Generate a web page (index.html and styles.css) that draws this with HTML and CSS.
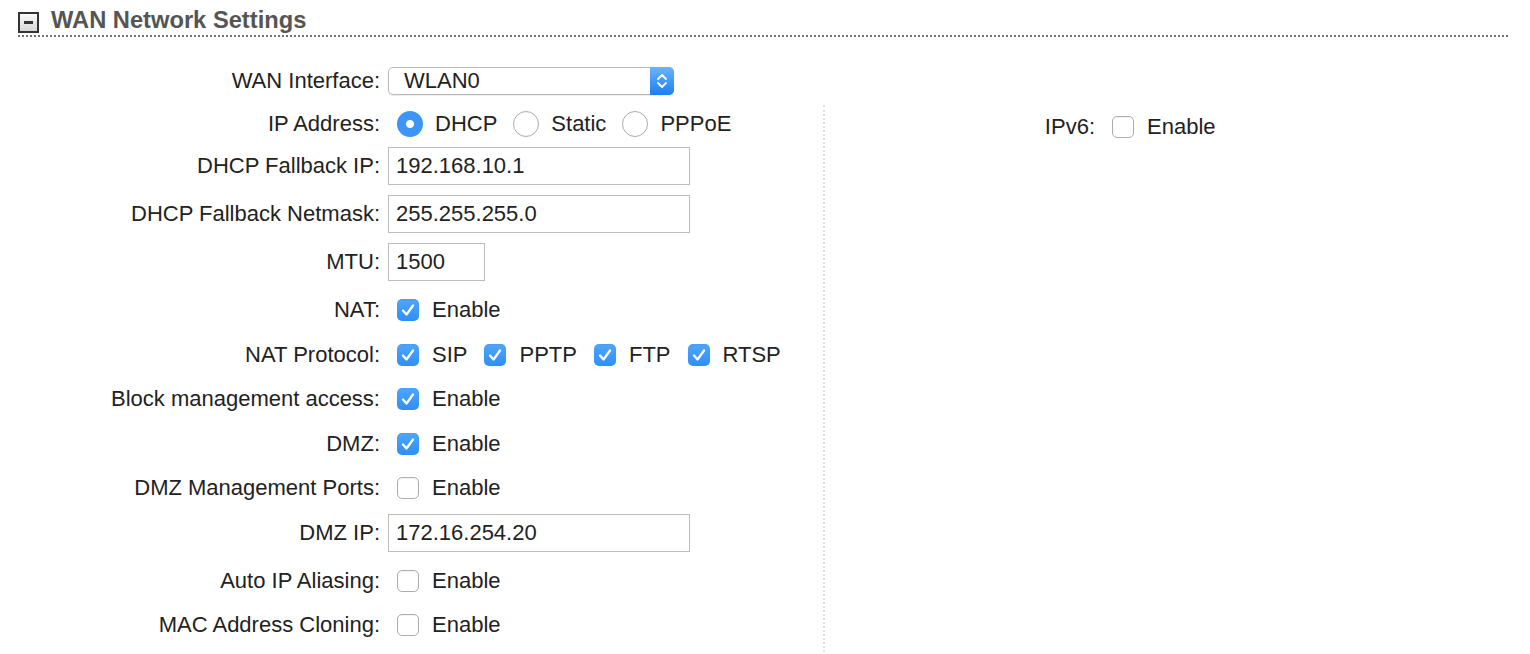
FILE: index.html
```html
<!DOCTYPE html>
<html lang="en">
<head>
  <meta charset="UTF-8">
  <title>WAN Network Settings</title>
  <link rel="stylesheet" href="styles.css">
</head>
<body>

  <div class="section">
    <!-- Kop -->
    <div class="section-head">
      <span class="toggle"><span class="toggle-bar"></span></span>
      <span class="section-title">WAN Network Settings</span>
    </div>

    <div class="row row-select">
      <span class="lbl">WAN Interface:</span>
      <div class="ctl">
        <div class="select">
          <span class="select-text">WLAN0</span>
          <span class="select-btn">
            <svg width="12" height="18" viewBox="0 0 12 18"><path d="M2 7 L6 3 L10 7 M2 11 L6 15 L10 11" fill="none" stroke="#fff" stroke-width="1.8" stroke-linecap="round" stroke-linejoin="round"/></svg>
          </span>
        </div>
      </div>
    </div>

    <div class="cols">
      <!-- Linkerkolom -->
      <div class="col-left">
        <div class="row row-radio">
          <span class="lbl">IP Address:</span>
          <div class="ctl">
            <span class="opt"><span class="radio on"></span><span class="opt-text">DHCP</span></span>
            <span class="opt"><span class="radio"></span><span class="opt-text">Static</span></span>
            <span class="opt"><span class="radio"></span><span class="opt-text">PPPoE</span></span>
          </div>
        </div>

        <div class="row row-input">
          <span class="lbl">DHCP Fallback IP:</span>
          <div class="ctl"><input class="text" type="text" value="192.168.10.1"></div>
        </div>

        <div class="row row-input">
          <span class="lbl">DHCP Fallback Netmask:</span>
          <div class="ctl"><input class="text" type="text" value="255.255.255.0"></div>
        </div>

        <div class="row row-input">
          <span class="lbl">MTU:</span>
          <div class="ctl"><input class="text short" type="text" value="1500"></div>
        </div>

        <div class="row row-check">
          <span class="lbl">NAT:</span>
          <div class="ctl">
            <span class="opt"><span class="cb on"><svg width="22" height="22" viewBox="0 0 22 22"><path d="M6 11.5 L9.5 15.5 L16 6.5" fill="none" stroke="#fff" stroke-width="2.3" stroke-linecap="round" stroke-linejoin="round"/></svg></span><span class="opt-text">Enable</span></span>
          </div>
        </div>

        <div class="row row-check">
          <span class="lbl">NAT Protocol:</span>
          <div class="ctl">
            <span class="opt"><span class="cb on"><svg width="22" height="22" viewBox="0 0 22 22"><path d="M6 11.5 L9.5 15.5 L16 6.5" fill="none" stroke="#fff" stroke-width="2.3" stroke-linecap="round" stroke-linejoin="round"/></svg></span><span class="opt-text">SIP</span></span>
            <span class="opt"><span class="cb on"><svg width="22" height="22" viewBox="0 0 22 22"><path d="M6 11.5 L9.5 15.5 L16 6.5" fill="none" stroke="#fff" stroke-width="2.3" stroke-linecap="round" stroke-linejoin="round"/></svg></span><span class="opt-text">PPTP</span></span>
            <span class="opt"><span class="cb on"><svg width="22" height="22" viewBox="0 0 22 22"><path d="M6 11.5 L9.5 15.5 L16 6.5" fill="none" stroke="#fff" stroke-width="2.3" stroke-linecap="round" stroke-linejoin="round"/></svg></span><span class="opt-text">FTP</span></span>
            <span class="opt"><span class="cb on"><svg width="22" height="22" viewBox="0 0 22 22"><path d="M6 11.5 L9.5 15.5 L16 6.5" fill="none" stroke="#fff" stroke-width="2.3" stroke-linecap="round" stroke-linejoin="round"/></svg></span><span class="opt-text">RTSP</span></span>
          </div>
        </div>

        <div class="row row-check">
          <span class="lbl">Block management access:</span>
          <div class="ctl">
            <span class="opt"><span class="cb on"><svg width="22" height="22" viewBox="0 0 22 22"><path d="M6 11.5 L9.5 15.5 L16 6.5" fill="none" stroke="#fff" stroke-width="2.3" stroke-linecap="round" stroke-linejoin="round"/></svg></span><span class="opt-text">Enable</span></span>
          </div>
        </div>

        <div class="row row-check">
          <span class="lbl">DMZ:</span>
          <div class="ctl">
            <span class="opt"><span class="cb on"><svg width="22" height="22" viewBox="0 0 22 22"><path d="M6 11.5 L9.5 15.5 L16 6.5" fill="none" stroke="#fff" stroke-width="2.3" stroke-linecap="round" stroke-linejoin="round"/></svg></span><span class="opt-text">Enable</span></span>
          </div>
        </div>

        <div class="row row-check">
          <span class="lbl">DMZ Management Ports:</span>
          <div class="ctl">
            <span class="opt"><span class="cb"></span><span class="opt-text">Enable</span></span>
          </div>
        </div>

        <div class="row row-input">
          <span class="lbl">DMZ IP:</span>
          <div class="ctl"><input class="text" type="text" value="172.16.254.20"></div>
        </div>

        <div class="row row-check">
          <span class="lbl">Auto IP Aliasing:</span>
          <div class="ctl">
            <span class="opt"><span class="cb"></span><span class="opt-text">Enable</span></span>
          </div>
        </div>

        <div class="row row-check">
          <span class="lbl">MAC Address Cloning:</span>
          <div class="ctl">
            <span class="opt"><span class="cb"></span><span class="opt-text">Enable</span></span>
          </div>
        </div>
      </div>

      <!-- Rechterkolom -->
      <div class="col-right">
        <div class="row row-check">
          <span class="lbl">IPv6:</span>
          <div class="ctl">
            <span class="opt"><span class="cb"></span><span class="opt-text">Enable</span></span>
          </div>
        </div>
      </div>
    </div>
  </div>

</body>
</html>
```

FILE: styles.css
```css
body {
  margin: 0;
  background: #fff;
  font-family: "Liberation Sans", Arial, Helvetica, sans-serif;
  font-size: 22px;
  color: #222;
  overflow: hidden;
}

.section {
  margin-left: 18px;
  width: 1490px;
}

.section-head {
  display: flex;
  align-items: center;
  height: 28px;
  padding-top: 7px;
  border-bottom: 2px dotted #707070;
}

.toggle {
  box-sizing: border-box;
  width: 21px;
  height: 21px;
  margin-top: 3px;
  border: 2px solid #333;
  background: linear-gradient(#fafafa, #d6d6d6);
  display: flex;
  align-items: center;
  justify-content: center;
}

.toggle-bar {
  width: 9px;
  height: 3px;
  background: #333;
}

.section-title {
  margin-left: 12px;
  font-weight: bold;
  font-size: 23.7px;
  color: #555;
  line-height: 26px;
  margin-top: -2px;
}

.row {
  display: flex;
  align-items: center;
  margin-bottom: 10px;
}

.row-select { height: 40px; margin-top: 24px; margin-bottom: 4px; }
.row-radio { height: 26px; }
.row-input { height: 38px; }
.row-check {
  box-sizing: border-box;
  height: 36.5px;
  padding-top: 2px;
  margin-bottom: 8px;
}

.lbl {
  width: 362px;
  text-align: right;
  flex-shrink: 0;
}

.ctl {
  margin-left: 8px;
  display: flex;
  align-items: center;
}

.cols {
  display: flex;
}

.col-left {
  width: 805px;
  padding-top: 6px;
}

.col-right {
  flex: 1;
  border-left: 2px dotted #dde3e3;
  padding-top: 3px;
  height: 560px;
}

.col-right .lbl {
  width: 270px;
}

/* select */
.select {
  box-sizing: border-box;
  width: 286px;
  height: 28px;
  border: 1px solid #b9b9b9;
  border-radius: 5px;
  display: flex;
  align-items: center;
  justify-content: space-between;
  background: #fff;
  box-shadow: 0 1px 1px rgba(0,0,0,0.08);
}

.select-text {
  padding-left: 15px;
  line-height: 26px;
}

.select-btn {
  width: 24px;
  height: 28px;
  margin-right: -1px;
  border-radius: 0 5px 5px 0;
  background: linear-gradient(#6ab4fb, #1b7ff8);
  display: flex;
  align-items: center;
  justify-content: center;
}

/* tekstvelden */
.text {
  box-sizing: border-box;
  width: 302px;
  height: 38px;
  border: 1px solid #bdbdbd;
  padding: 0 7px;
  font-family: inherit;
  font-size: 22px;
  color: #222;
  outline: none;
}

.text.short {
  width: 97px;
}

/* opties */
.opt {
  display: flex;
  align-items: center;
  margin-right: 17px;
}

.opt-text {
  margin-left: 13px;
}

.cb {
  box-sizing: border-box;
  width: 22px;
  height: 22px;
  margin-left: 9px;
  border: 1px solid #acacac;
  border-radius: 5px;
  background: #fff;
  box-shadow: inset 0 1px 1px rgba(0,0,0,0.05);
}

.opt + .opt .cb,
.opt + .opt .radio {
  margin-left: 0;
}

.cb.on {
  border: none;
  background: linear-gradient(#4fa6fb, #2f8ff7);
}

.cb svg {
  display: block;
}

.radio {
  box-sizing: border-box;
  width: 26px;
  height: 26px;
  margin-left: 9px;
  border: 1px solid #acacac;
  border-radius: 50%;
  background: #fff;
}

.radio + .opt-text {
  margin-left: 12px;
}

.row-radio .opt {
  margin-right: 16px;
}

.radio.on {
  border: none;
  background: radial-gradient(circle, #fff 0, #fff 3.5px, #3d95f7 4.5px);
}
```
